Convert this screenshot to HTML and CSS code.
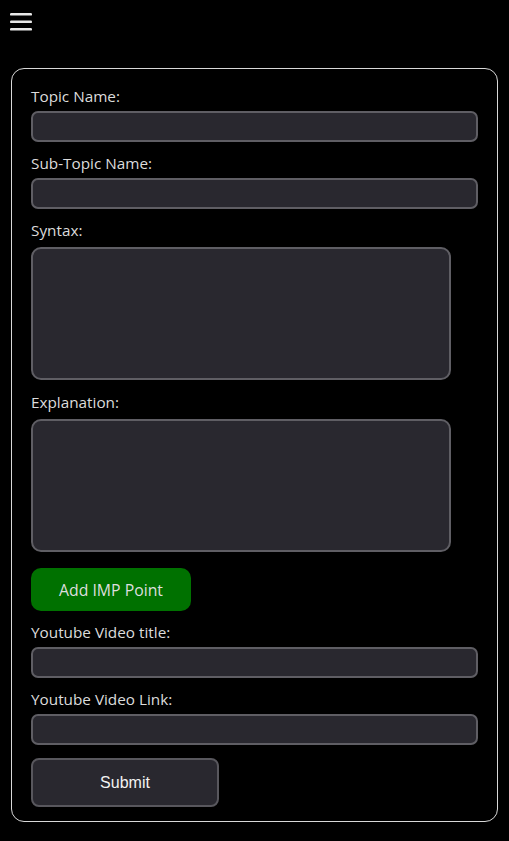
FILE: index.html
```html
<!DOCTYPE html>
<html>
<head>
<meta charset="utf-8">
<link rel="stylesheet" href="styles.css">
</head>
<body>
<header class="topbar">
  <svg class="menu-icon" width="22" height="19" viewBox="0 0 22 19">
    <rect x="0" y="0" width="22" height="2.6" rx="1.2" fill="#e8e8e8"/>
    <rect x="0" y="7.5" width="22" height="2.6" rx="1.2" fill="#e8e8e8"/>
    <rect x="0" y="15" width="22" height="2.6" rx="1.2" fill="#e8e8e8"/>
  </svg>
</header>
<form class="card">
  <label class="lbl">Topic Name:</label>
  <input class="field" type="text">
  <label class="lbl">Sub-Topic Name:</label>
  <input class="field" type="text">
  <label class="lbl">Syntax:</label>
  <textarea class="area"></textarea>
  <label class="lbl">Explanation:</label>
  <textarea class="area"></textarea>
  <button type="button" class="btn-green">Add IMP Point</button>
  <label class="lbl">Youtube Video title:</label>
  <input class="field" type="text">
  <label class="lbl">Youtube Video Link:</label>
  <input class="field" type="text">
  <button type="button" class="btn-submit">Submit</button>
</form>
</body>
</html>
```
FILE: styles.css
```css
html, body {
  margin: 0;
  padding: 0;
  background: #000;
}
body {
  font-family: "Open Sans", "Noto Sans", sans-serif;
  color: #dcdcdc;
  padding-bottom: 19px;
}
.topbar {
  height: 68px;
  padding: 13px 0 0 10px;
  box-sizing: border-box;
}
.menu-icon {
  display: block;
}
.card {
  margin: 0 11px;
  border: 1px solid #d8d8d8;
  border-radius: 13px;
  padding: 15px 19px 14px;
  display: flex;
  flex-direction: column;
  align-items: flex-start;
}
.lbl {
  display: block;
  font-size: 15.3px;
  line-height: 20px;
  margin: 2px 0 5px;
}
.field {
  box-sizing: border-box;
  width: 447px;
  height: 31px;
  margin: 0 0 9px;
  background: #29282f;
  border: 2px solid #5f5e64;
  border-radius: 7px;
  padding: 0 8px;
  color: #ddd;
}
.area {
  box-sizing: border-box;
  width: 420px;
  height: 133px;
  margin: 2px 0 10px;
  background: #29282f;
  border: 2px solid #5f5e64;
  border-radius: 10px;
  resize: none;
}
.btn-green {
  width: 160px;
  height: 43px;
  margin: 6px 0 9px;
  background: #007100;
  border: none;
  border-radius: 10px;
  color: #dedede;
  font-family: "Open Sans", "Noto Sans", sans-serif;
  font-size: 15.8px;
}
.btn-submit {
  box-sizing: border-box;
  width: 188px;
  height: 49px;
  margin-top: 4px;
  background: #29282f;
  border: 2px solid #58575d;
  border-radius: 8px;
  color: #f2f2f2;
  font-family: "Liberation Sans", Arial, sans-serif;
  font-size: 16px;
}
```
